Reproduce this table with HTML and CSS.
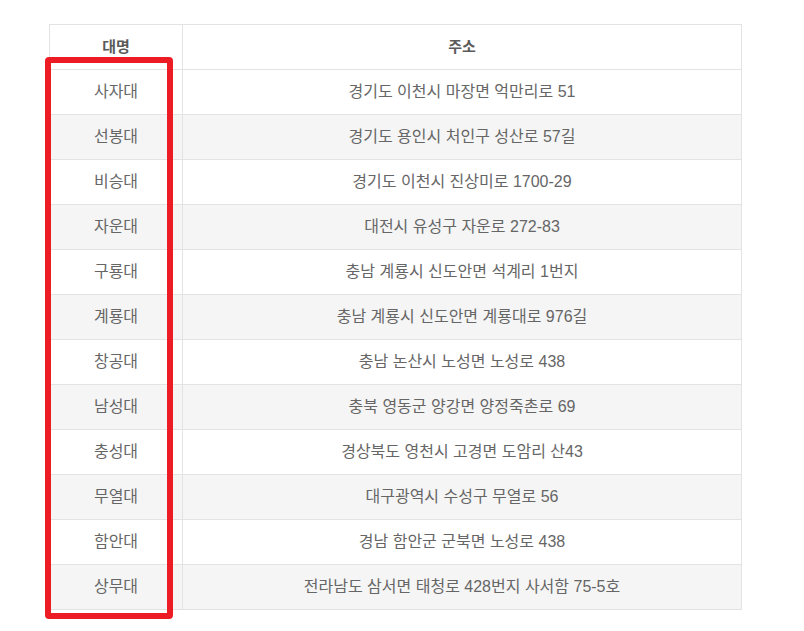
FILE: index.html
```html
<!DOCTYPE html>
<html lang="ko">
<head>
<meta charset="utf-8">
<link rel="stylesheet" href="styles.css">
</head>
<body>
<div class="wrap">
  <table class="camps">
    <thead>
      <tr><th class="c-name">대명</th><th>주소</th></tr>
    </thead>
    <tbody>
      <tr><td>사자대</td><td>경기도 이천시 마장면 억만리로 51</td></tr>
      <tr><td>선봉대</td><td>경기도 용인시 처인구 성산로 57길</td></tr>
      <tr><td>비승대</td><td>경기도 이천시 진상미로 1700-29</td></tr>
      <tr><td>자운대</td><td>대전시 유성구 자운로 272-83</td></tr>
      <tr><td>구룡대</td><td>충남 계룡시 신도안면 석계리 1번지</td></tr>
      <tr><td>계룡대</td><td>충남 계룡시 신도안면 계룡대로 976길</td></tr>
      <tr><td>창공대</td><td>충남 논산시 노성면 노성로 438</td></tr>
      <tr><td>남성대</td><td>충북 영동군 양강면 양정죽촌로 69</td></tr>
      <tr><td>충성대</td><td>경상북도 영천시 고경면 도암리 산43</td></tr>
      <tr><td>무열대</td><td>대구광역시 수성구 무열로 56</td></tr>
      <tr><td>함안대</td><td>경남 함안군 군북면 노성로 438</td></tr>
      <tr><td>상무대</td><td>전라남도 삼서면 태청로 428번지 사서함 75-5호</td></tr>
    </tbody>
  </table>
  <div class="highlight"></div>
</div>
</body>
</html>
```
FILE: styles.css
```css
html, body {
  margin: 0;
  padding: 0;
  background: #ffffff;
}
body {
  font-family: "Liberation Sans", "Noto Sans CJK KR", sans-serif;
  color: #666666;
}
.wrap {
  position: relative;
  padding: 24px 0 22px 49px;
}
.camps {
  border-collapse: collapse;
  width: 693px;
  table-layout: fixed;
  font-size: 16px;
}
.camps th, .camps td {
  border: 1px solid #e3e3e3;
  height: 44px;
  padding: 0;
  text-align: center;
  vertical-align: middle;
  line-height: 20px;
}
.camps th {
  font-size: 15px;
  font-weight: bold;
  color: #5a5a5a;
}
.camps .c-name {
  width: 132px;
}
.camps tbody tr:nth-child(even) td {
  background: #f5f5f5;
}
.highlight {
  position: absolute;
  left: 45px;
  top: 57px;
  width: 116px;
  height: 550px;
  border: 6px solid #ed1c24;
  border-radius: 4px;
}
```
